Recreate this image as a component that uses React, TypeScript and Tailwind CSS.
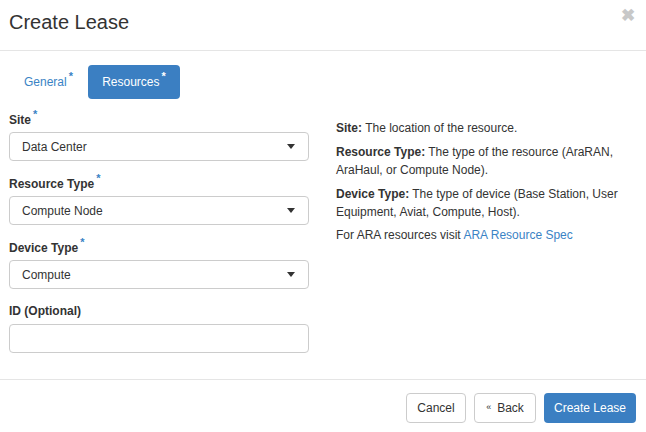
import React from "react";

const Caret = () => (
  <svg width="8" height="5" viewBox="0 0 8 5" className="shrink-0">
    <path d="M0 0h8L4 5z" fill="#333" />
  </svg>
);

const Star = ({ white }: { white?: boolean }) => (
  <span className={`relative -top-[6px] ml-[2px] text-[11px] font-bold ${white ? "text-white" : "text-[#3a83c5]"}`}>*</span>
);

function Select({ value }: { value: string }) {
  return (
    <div className="h-[29px] w-[300px] rounded-[4px] border border-[#ccc] flex items-center justify-between pl-[12px] pr-[13px] text-[12px] text-[#333]">
      <span>{value}</span>
      <Caret />
    </div>
  );
}

export default function App() {
  return (
    <div className="w-[646px] h-[432px] bg-white text-[#333] overflow-hidden" style={{ fontFamily: '"Liberation Sans", Arial, sans-serif' }}>
      <div className="h-[51px] border-b border-[#e5e5e5] flex items-start justify-between pl-[9px] pr-[11px]">
        <h1 className="text-[20px] leading-[22px] mt-[11px] text-[#333]">Create Lease</h1>
        <span className="text-[#c8c8c8] text-[17px] font-bold leading-none mt-[7px]">✖</span>
      </div>
      <div className="flex items-center pl-[9px] mt-[14px] h-[34px]">
        <div className="px-[15px] text-[12px] text-[#3a83c5]">General<Star /></div>
        <div className="h-[34px] w-[92px] rounded-[4px] bg-[#3b7fc2] text-white text-[12px] flex items-center justify-center">Resources<Star white /></div>
      </div>
      <div className="flex mt-[13px] pl-[9px]">
        <div className="w-[300px] flex flex-col text-[12px]">
          <div className="font-bold h-[20px] leading-[16px]">Site<Star /></div>
          <Select value="Data Center" />
          <div className="font-bold h-[20px] leading-[16px] mt-[15px]">Resource Type<Star /></div>
          <Select value="Compute Node" />
          <div className="font-bold h-[20px] leading-[16px] mt-[15px]">Device Type<Star /></div>
          <Select value="Compute" />
          <div className="font-bold h-[20px] leading-[16px] mt-[14px]">ID (Optional)</div>
          <div className="h-[29px] w-[300px] rounded-[4px] border border-[#ccc] mt-[1px]" />
        </div>
        <div className="ml-[27px] w-[290px] text-[12px] leading-[18px] pt-[7px] text-[#333]">
          <p><b>Site:</b> The location of the resource.</p>
          <p className="mt-[6px]"><b>Resource Type:</b> The type of the resource (AraRAN, AraHaul, or Compute Node).</p>
          <p className="mt-[6px]"><b>Device Type:</b> The type of device (Base Station, User Equipment, Aviat, Compute, Host).</p>
          <p className="mt-[5px]">For ARA resources visit <span className="text-[#3a83c5]">ARA Resource Spec</span></p>
        </div>
      </div>
      <div className="mt-[26px] border-t border-[#e5e5e5] flex justify-end gap-[8px] pt-[13px] pr-[10px]">
        <div className="h-[30px] w-[60px] rounded-[4px] border border-[#ccc] flex items-center justify-center text-[12px]">Cancel</div>
        <div className="h-[30px] w-[62px] rounded-[4px] border border-[#ccc] flex items-center justify-center text-[12px]"><span className="text-[9px] mr-[6px]">«</span>Back</div>
        <div className="h-[30px] w-[92px] rounded-[4px] bg-[#3b7fc2] text-white flex items-center justify-center text-[12px]">Create Lease</div>
      </div>
    </div>
  );
}
